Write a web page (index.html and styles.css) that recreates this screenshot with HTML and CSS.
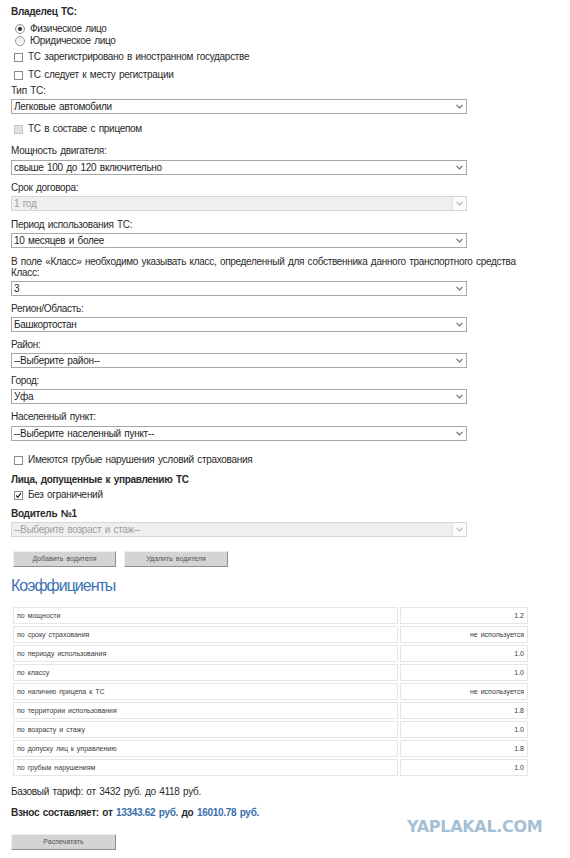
FILE: index.html
```html
<!DOCTYPE html>
<html lang="ru">
<head>
<meta charset="utf-8">
<title>ОСАГО калькулятор</title>
<link rel="stylesheet" href="styles.css">
</head>
<body>
<form class="form">
  <div class="title">Владелец ТС:</div>
  <div class="row radio-row r1"><span class="radio checked"></span>Физическое лицо</div>
  <div class="row radio-row"><span class="radio"></span>Юридическое лицо</div>
  <div class="row cb-row m4"><span class="cb"></span>ТС зарегистрировано в иностранном государстве</div>
  <div class="row cb-row m6"><span class="cb"></span>ТС следует к месту регистрации</div>
  <div class="lbl m4">Тип ТС:</div>
  <div class="sel m2"><span class="val">Легковые автомобили</span><svg class="chev" viewBox="0 0 7 5" width="7" height="5"><path d="M0.5 0.8 L3.5 3.8 L6.5 0.8" fill="none" stroke="#6e6e6e" stroke-width="1.2"/></svg></div>
  <div class="row cb-row m9 dis"><span class="cb disabled"></span>ТС в составе с прицепом</div>
  <div class="lbl m10">Мощность двигателя:</div>
  <div class="sel m3"><span class="val">свыше 100 до 120 включительно</span><svg class="chev" viewBox="0 0 7 5" width="7" height="5"><path d="M0.5 0.8 L3.5 3.8 L6.5 0.8" fill="none" stroke="#6e6e6e" stroke-width="1.2"/></svg></div>
  <div class="lbl m7">Срок договора:</div>
  <div class="sel disabled m2"><span class="val">1 год</span><span class="arrbox"><svg class="chev" viewBox="0 0 7 5" width="7" height="5"><path d="M0.5 0.8 L3.5 3.8 L6.5 0.8" fill="none" stroke="#b5b5b5" stroke-width="1.2"/></svg></span></div>
  <div class="lbl m8">Период использования ТС:</div>
  <div class="sel m2"><span class="val">10 месяцев и более</span><svg class="chev" viewBox="0 0 7 5" width="7" height="5"><path d="M0.5 0.8 L3.5 3.8 L6.5 0.8" fill="none" stroke="#6e6e6e" stroke-width="1.2"/></svg></div>
  <div class="note m8">В поле «Класс» необходимо указывать класс, определенный для собственника данного транспортного средства</div>
  <div class="lbl">Класс:</div>
  <div class="sel m2"><span class="val">3</span><svg class="chev" viewBox="0 0 7 5" width="7" height="5"><path d="M0.5 0.8 L3.5 3.8 L6.5 0.8" fill="none" stroke="#6e6e6e" stroke-width="1.2"/></svg></div>
  <div class="lbl m7">Регион/Область:</div>
  <div class="sel m2"><span class="val">Башкортостан</span><svg class="chev" viewBox="0 0 7 5" width="7" height="5"><path d="M0.5 0.8 L3.5 3.8 L6.5 0.8" fill="none" stroke="#6e6e6e" stroke-width="1.2"/></svg></div>
  <div class="lbl m7">Район:</div>
  <div class="sel m2"><span class="val">--Выберите район--</span><svg class="chev" viewBox="0 0 7 5" width="7" height="5"><path d="M0.5 0.8 L3.5 3.8 L6.5 0.8" fill="none" stroke="#6e6e6e" stroke-width="1.2"/></svg></div>
  <div class="lbl m7">Город:</div>
  <div class="sel m2"><span class="val">Уфа</span><svg class="chev" viewBox="0 0 7 5" width="7" height="5"><path d="M0.5 0.8 L3.5 3.8 L6.5 0.8" fill="none" stroke="#6e6e6e" stroke-width="1.2"/></svg></div>
  <div class="lbl m7">Населенный пункт:</div>
  <div class="sel m3"><span class="val">--Выберите населенный пункт--</span><svg class="chev" viewBox="0 0 7 5" width="7" height="5"><path d="M0.5 0.8 L3.5 3.8 L6.5 0.8" fill="none" stroke="#6e6e6e" stroke-width="1.2"/></svg></div>
  <div class="row cb-row m13"><span class="cb"></span>Имеются грубые нарушения условий страхования</div>
  <div class="title m8">Лица, допущенные к управлению ТС</div>
  <div class="row cb-row m3"><span class="cb"><svg viewBox="0 0 9 9" width="9" height="9"><path d="M1.5 4.5 L3.6 6.8 L7.6 1.6" fill="none" stroke="#222" stroke-width="1.6"/></svg></span>Без ограничений</div>
  <div class="title m7">Водитель №1</div>
  <div class="sel disabled m2"><span class="val">--Выберите возраст и стаж--</span><span class="arrbox"><svg class="chev" viewBox="0 0 7 5" width="7" height="5"><path d="M0.5 0.8 L3.5 3.8 L6.5 0.8" fill="none" stroke="#b5b5b5" stroke-width="1.2"/></svg></span></div>
  <div class="btns">
    <button type="button" class="btn w103">Добавить водителя</button>
    <button type="button" class="btn w104">Удалить водителя</button>
  </div>

  <h2 class="heading">Коэффициенты</h2>
  <table class="coef">
    <tr><td class="name">по мощности</td><td class="num">1.2</td></tr>
    <tr><td class="name">по сроку страхования</td><td class="num">не используется</td></tr>
    <tr><td class="name">по периоду использования</td><td class="num">1.0</td></tr>
    <tr><td class="name">по классу</td><td class="num">1.0</td></tr>
    <tr><td class="name">по наличию прицепа к ТС</td><td class="num">не используется</td></tr>
    <tr><td class="name">по территории использования</td><td class="num">1.8</td></tr>
    <tr><td class="name">по возрасту и стажу</td><td class="num">1.0</td></tr>
    <tr><td class="name">по допуску лиц к управлению</td><td class="num">1.8</td></tr>
    <tr><td class="name">по грубым нарушениям</td><td class="num">1.0</td></tr>
  </table>

  <div class="footer">
    <div class="base">Базовый тариф: от 3432 руб. до 4118 руб.</div>
    <div class="total">Взнос составляет: от <span class="blue">13343.62 руб.</span> до <span class="blue">16010.78 руб.</span></div>
    <button type="button" class="btn w105 printbtn">Распечатать</button>
    <div class="watermark">YAPLAKAL.COM</div>
  </div>
</form>
</body>
</html>
```

FILE: styles.css
```css
html, body {
  margin: 0;
  padding: 0;
  background: #ffffff;
}
body {
  font-family: "Liberation Sans", Arial, sans-serif;
  font-size: 10px;
  color: #2a2a2a;
  width: 570px;
  height: 858px;
  overflow: hidden;
}
.form {
  display: flex;
  flex-direction: column;
  align-items: flex-start;
  padding: 6px 0 0 11px;
  word-spacing: 1px;
  letter-spacing: -0.3px;
}
.title {
  font-weight: bold;
  line-height: 12px;
  word-spacing: 1px;
}
.lbl, .row {
  line-height: 12px;
}
.note {
  line-height: 11px;
}
.row {
  display: flex;
  align-items: center;
}
.radio-row { padding-left: 4px; }
.r1 { margin-top: 5px; }
.cb-row { padding-left: 3px; }
.dis { color: #2a2a2a; }

.m2 { margin-top: 2px; }
.m3 { margin-top: 3px; }
.m4 { margin-top: 4px; }
.m6 { margin-top: 6px; }
.m7 { margin-top: 7px; }
.m8 { margin-top: 8px; }
.m9 { margin-top: 9px; }
.m10 { margin-top: 10px; }
.m13 { margin-top: 13px; }

.radio {
  width: 8px;
  height: 8px;
  border: 1px solid #9a9a9a;
  border-radius: 50%;
  background: linear-gradient(#e8e8e8, #ffffff);
  margin-right: 5px;
  display: flex;
  align-items: center;
  justify-content: center;
  box-sizing: content-box;
}
.radio.checked::after {
  content: "";
  width: 4px;
  height: 4px;
  border-radius: 50%;
  background: #2b2b2b;
}
.cb {
  width: 9px;
  height: 9px;
  border: 1px solid #8a8a8a;
  background: #fff;
  margin-right: 5px;
  display: flex;
  align-items: center;
  justify-content: center;
  box-sizing: border-box;
}
.cb svg { display: block; }
.cb.disabled {
  background: #e2e2e2;
  border-color: #c6c6c6;
}

.sel {
  width: 456px;
  height: 15px;
  box-sizing: border-box;
  border: 1px solid #a8a8a8;
  background: #fff;
  display: flex;
  align-items: center;
  justify-content: space-between;
  padding: 0 3px 0 2px;
  line-height: 12px;
  color: #1e1e1e;
}
.sel .chev { display: block; }
.sel.disabled {
  background: #efefef;
  border-color: #d6d6d6;
  color: #a0a0a0;
  padding-right: 0;
}
.arrbox {
  width: 13px;
  height: 13px;
  background: #fbfbfb;
  border-left: 1px solid #e4e4e4;
  display: flex;
  align-items: center;
  justify-content: center;
}

.btns {
  display: flex;
  gap: 8px;
  margin-top: 14px;
  padding-left: 2px;
}
.btn {
  height: 16px;
  box-sizing: border-box;
  background: #d4d4d4;
  border: 1px solid;
  border-color: #eeeeee #8e8e8e #8e8e8e #eeeeee;
  font-family: "Liberation Sans", Arial, sans-serif;
  font-size: 7px;
  color: #555;
  padding: 0;
  line-height: 14px;
  word-spacing: 1px;
  letter-spacing: 0;
}
.w103 { width: 103px; }
.w104 { width: 104px; }
.w105 { width: 105px; }

.heading {
  margin: 9px 0 0 0;
  font-size: 16px;
  line-height: 20px;
  font-weight: normal;
  color: #3b72b4;
  word-spacing: 0;
  letter-spacing: -1px;
}

.coef {
  margin-top: 9px;
  border-collapse: separate;
  border-spacing: 2px;
  width: 519px;
  word-spacing: 1px;
  letter-spacing: 0;
}
.coef td {
  height: 17px;
  box-sizing: border-box;
  border: 1px solid #e6e6e6;
  font-size: 7px;
  color: #3a3a3a;
  padding: 0 3px;
  line-height: 15px;
}
.coef .name { width: 387px; }
.coef .num { width: 128px; text-align: right; }

.footer {
  position: relative;
  width: 548px;
  display: flex;
  flex-direction: column;
  align-items: flex-start;
}
.base {
  margin-top: 8px;
  line-height: 12px;
}
.total {
  margin-top: 9px;
  line-height: 12px;
  font-weight: bold;
}
.blue { color: #3a6fab; }
.printbtn { margin-top: 15px; }
.watermark {
  position: absolute;
  left: 396px;
  top: 41px;
  font-family: "DejaVu Sans", sans-serif;
  font-weight: bold;
  font-size: 16px;
  letter-spacing: -0.3px;
  word-spacing: 0;
  color: #a6bfd4;
  line-height: 16px;
}
```
